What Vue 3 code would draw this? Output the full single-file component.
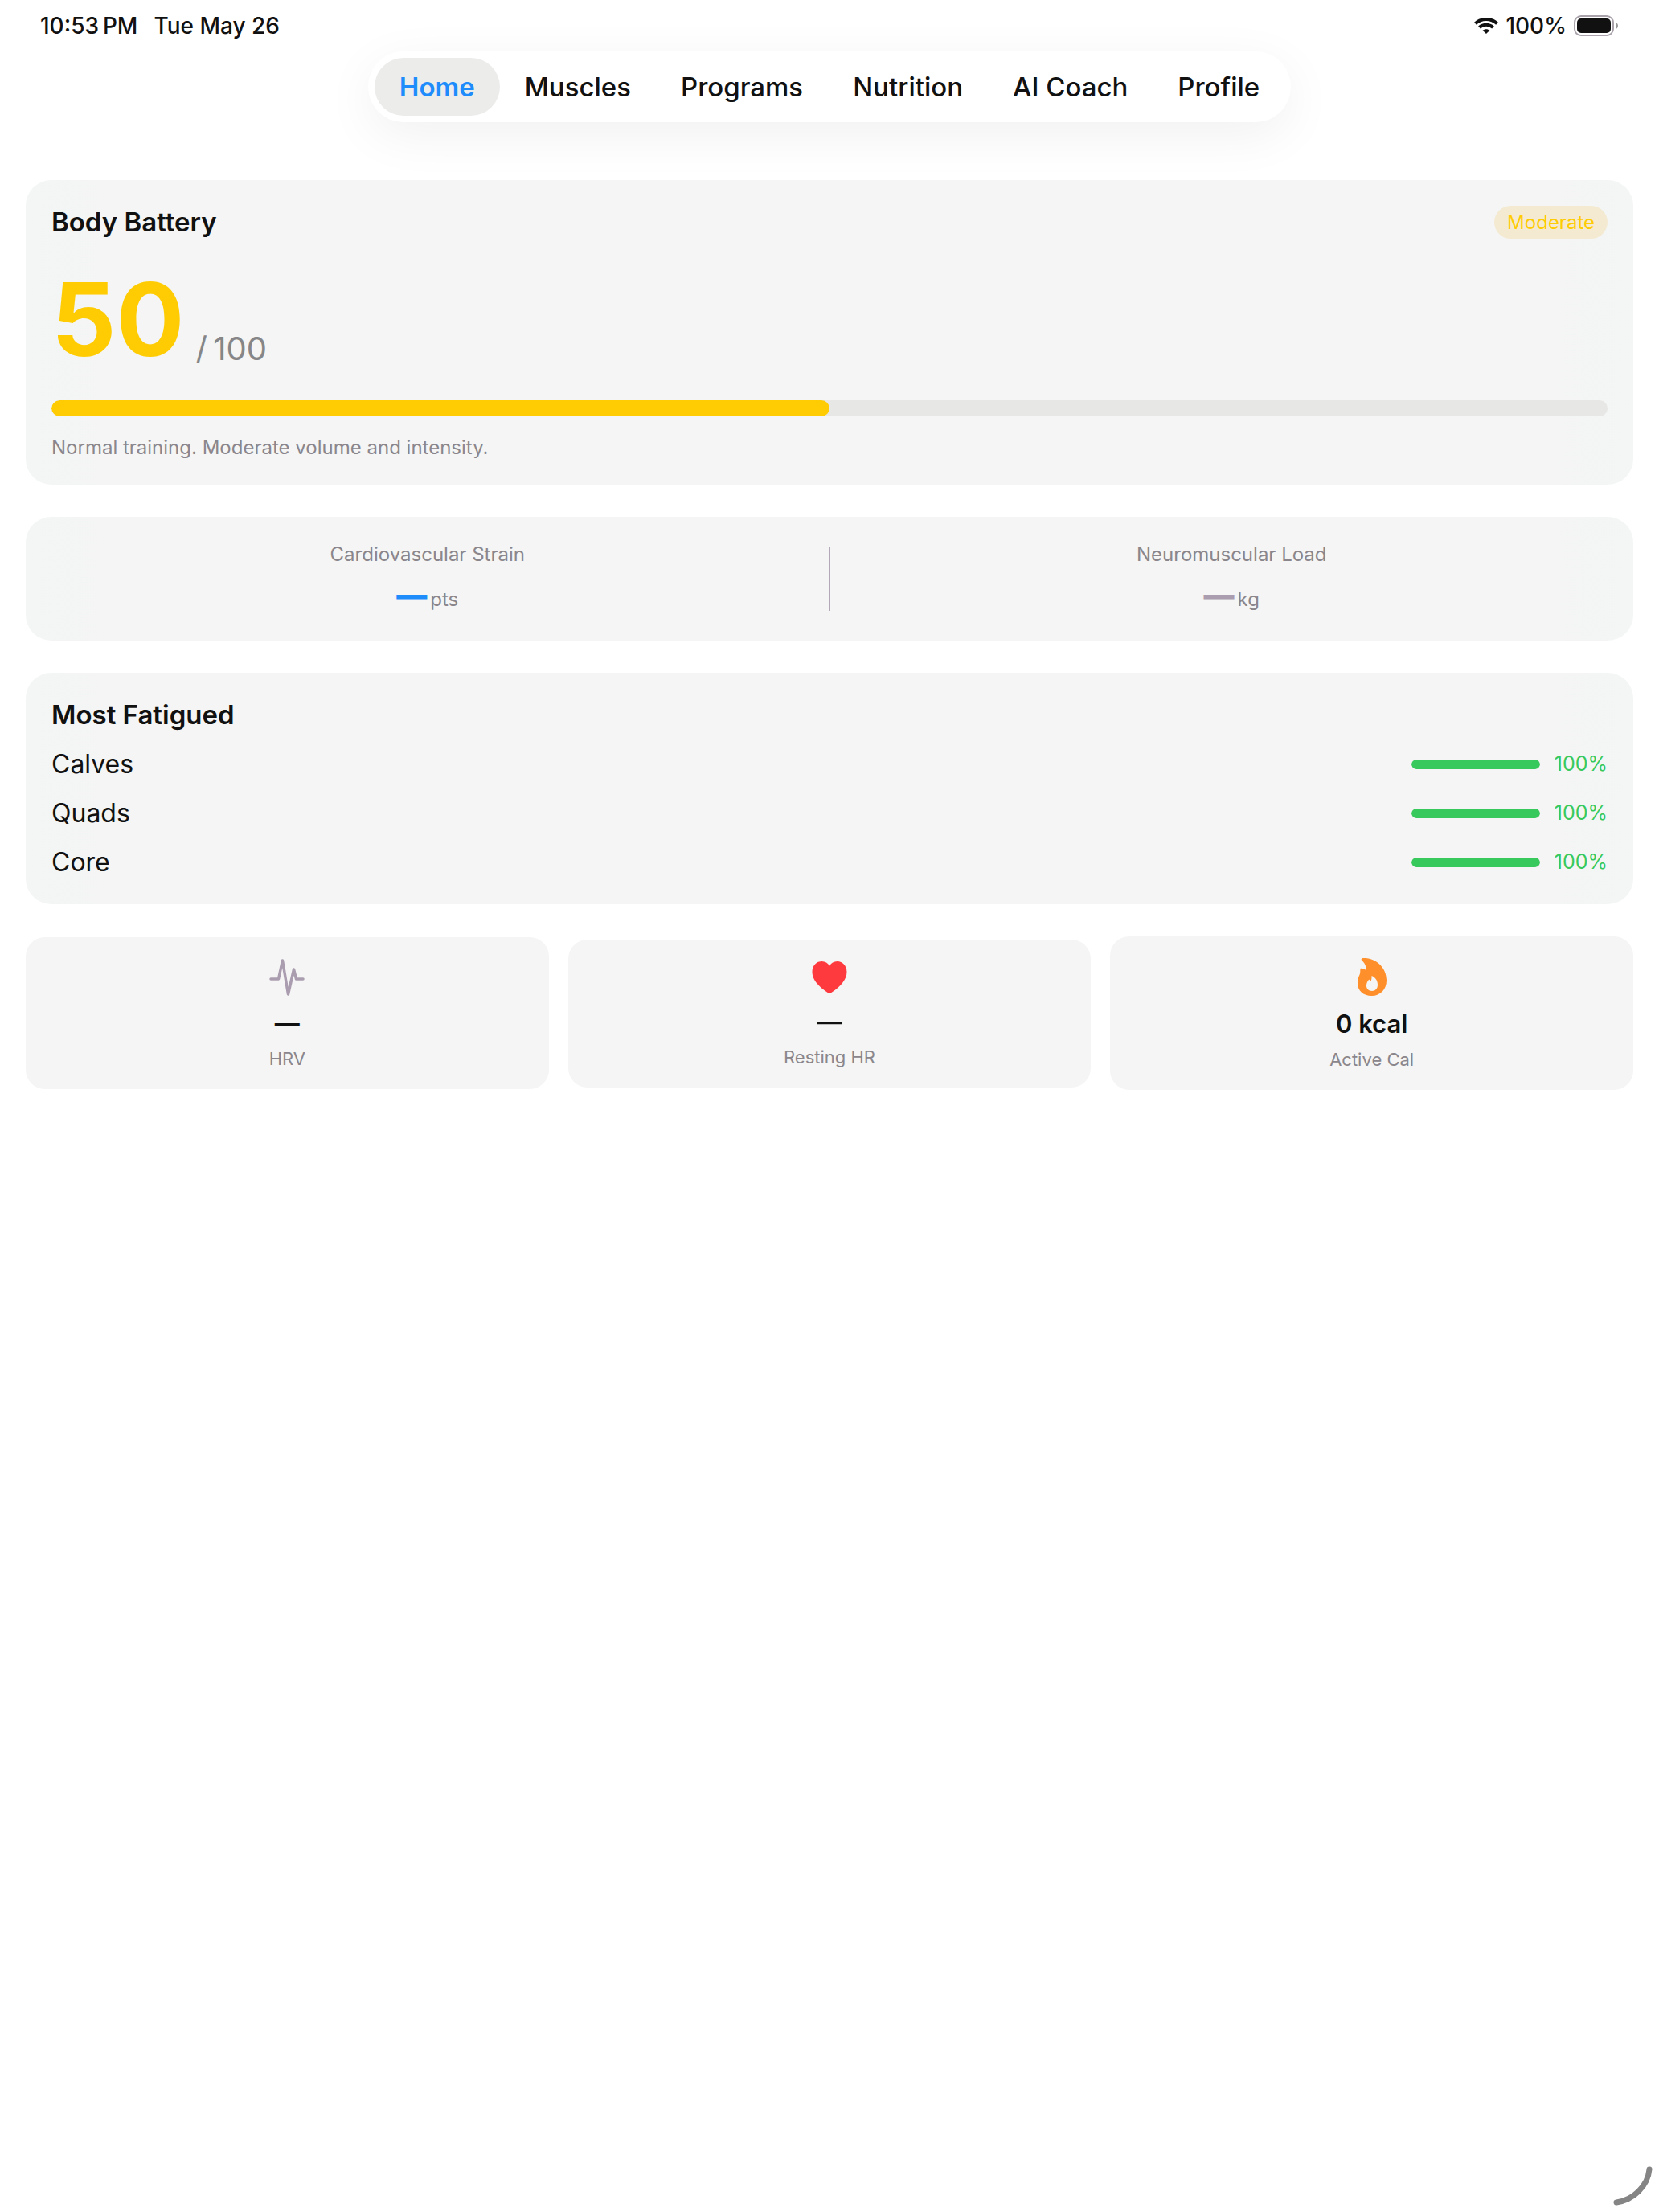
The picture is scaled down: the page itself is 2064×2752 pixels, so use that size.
<script setup>
const tabs = ['Home', 'Muscles', 'Programs', 'Nutrition', 'AI Coach', 'Profile']
const activeTab = 'Home'

const battery = {
  score: 50,
  max: 100,
  level: 'Moderate',
  advice: 'Normal training. Moderate volume and intensity.',
}

const loads = [
  { label: 'Cardiovascular Strain', value: '—', unit: 'pts', tone: 'blue' },
  { label: 'Neuromuscular Load', value: '—', unit: 'kg', tone: 'muted' },
]

const muscles = [
  { name: 'Calves', recovery: 100 },
  { name: 'Quads', recovery: 100 },
  { name: 'Core', recovery: 100 },
]

const vitals = [
  { id: 'hrv', label: 'HRV', value: '—' },
  { id: 'heart', label: 'Resting HR', value: '—' },
  { id: 'flame', label: 'Active Cal', value: '0 kcal' },
]
</script>

<template>
  <div class="screen">
    <header class="status">
      <div class="status-side">
        <time>10:53&#8239;PM</time>
        <span>Tue May 26</span>
      </div>
      <div class="status-side indicators">
        <svg class="wifi" viewBox="0 0 30 20" aria-label="Wi-Fi">
          <path d="M1.5 7.2C9 .1 21 .1 28.500 7.200" />
          <path d="M6.500 12C11.300 7.700 18.700 7.700 23.500 12" />
          <path class="dot" d="M15 20L10.600 15.700C13 13.600 17 13.600 19.400 15.700Z" />
        </svg>
        <span>100%</span>
        <svg class="cell" viewBox="0 0 56 26" aria-label="Battery full">
          <rect class="shell" x="1" y="1" width="48" height="24" rx="8" />
          <rect x="4" y="4" width="42" height="18" rx="5" fill="#111" />
          <path class="nub" d="M52 9C56 10 56 16 52 17Z" />
        </svg>
      </div>
    </header>

    <nav class="tabs" aria-label="Main">
      <a
        v-for="tab in tabs"
        :key="tab"
        href="#"
        class="tab"
        :class="{ active: tab === activeTab }"
        >{{ tab }}</a
      >
    </nav>

    <main class="content">
      <section class="card battery">
        <div class="row">
          <h2>Body Battery</h2>
          <span class="badge">{{ battery.level }}</span>
        </div>
        <p class="score">
          <strong>{{ battery.score }}</strong>
          <span>/&#8239;{{ battery.max }}</span>
        </p>
        <div class="meter" role="progressbar" :aria-valuenow="battery.score" aria-label="Body Battery">
          <div class="meter-fill" :style="{ width: battery.score + '%' }"></div>
        </div>
        <p class="caption">{{ battery.advice }}</p>
      </section>

      <section class="card loads">
        <template v-for="(load, index) in loads" :key="load.label">
          <div v-if="index > 0" class="divider"></div>
          <div class="load">
            <p class="caption">{{ load.label }}</p>
            <p class="load-value">
              <strong :class="load.tone">{{ load.value }}</strong>
              <span>{{ load.unit }}</span>
            </p>
          </div>
        </template>
      </section>

      <section class="card fatigue">
        <h2>Most Fatigued</h2>
        <div v-for="muscle in muscles" :key="muscle.name" class="row">
          <span class="muscle">{{ muscle.name }}</span>
          <span class="recovery">
            <span class="bar" role="progressbar" :aria-valuenow="muscle.recovery" :aria-label="muscle.name">
              <span class="bar-fill" :style="{ width: muscle.recovery + '%' }"></span>
            </span>
            <span class="percent">{{ muscle.recovery }}%</span>
          </span>
        </div>
      </section>

      <section class="vitals">
        <article v-for="vital in vitals" :key="vital.id" class="card vital" :class="vital.id">
          <div class="icon">
            <svg v-if="vital.id === 'hrv'" width="44" height="46" viewBox="0 0 44 46">
              <path
                d="M2 25H11.500L16.500 2L23.500 44L30.500 13L33.500 25H42"
                fill="none"
                stroke="#ab9db0"
                stroke-width="3.5"
                stroke-linecap="round"
                stroke-linejoin="round"
              />
            </svg>
            <svg v-else-if="vital.id === 'heart'" width="44" height="40" viewBox="0 0 44 40">
              <path
                d="M22 40C21 40 20 39.300 19 38.600C8 31 .5 22.500 .5 13.200C.5 5.600 5.700 0 12.400 0C16.600 0 20 2.200 22 5.800C24 2.200 27.400 0 31.600 0C38.300 0 43.500 5.600 43.500 13.200C43.500 22.500 36 31 25 38.600C24 39.300 23 40 22 40Z"
                fill="#ff3a3f"
              />
            </svg>
            <svg v-else width="36" height="47" viewBox="0 0 36 47">
              <path
                fill-rule="evenodd"
                d="M6.500 0C22 -.8 36 11 36 27.500C36 39 28.500 47 17.500 47C7 47 0 40.500 0 31C0 26.500 1.200 23.500 2.600 20.500C3.600 18 3.200 15.500 3.400 13C5.800 12.200 8.500 13 10.800 15.500C11 10 8.500 5.500 5 2.500C4.200 1.500 5 .1 6.500 0ZM17.500 22C17.800 24.500 17.300 26.500 16.500 29L14.200 26.500C12.500 29 11 31 11 34.300C11 38.300 13.900 41 17.900 41C22.200 41 25 38 25 33.300C25 28 22 23.800 17.500 22Z"
                fill="#ff8f2b"
              />
            </svg>
          </div>
          <p class="vital-value">{{ vital.value }}</p>
          <p class="vital-label">{{ vital.label }}</p>
        </article>
      </section>
    </main>

    <svg class="corner" viewBox="0 0 50 50" aria-hidden="true">
      <path d="M46 5C44 26 26 43 5 46" />
    </svg>
  </div>
</template>

<style>
body {
  background: #fff;
}
</style>

<style scoped>
.screen {
  font-family: Inter, 'Liberation Sans', sans-serif;
  color: #111;
}
h2,
p {
  margin: 0;
}
.status {
  display: flex;
  justify-content: space-between;
  height: 64px;
  padding: 0 50px;
  font-size: 28px;
  font-weight: 500;
  line-height: 64px;
}
.status-side {
  display: flex;
  align-items: center;
  gap: 20px;
}
.indicators {
  gap: 9px;
}
.wifi {
  width: 30px;
  height: 20px;
}
.wifi path {
  fill: none;
  stroke: #111;
  stroke-width: 4;
}
.wifi .dot {
  fill: #111;
  stroke: none;
}
.cell {
  width: 56px;
  height: 26px;
}
.cell .shell {
  fill: none;
  stroke: #a9a2ab;
  stroke-width: 2;
}
.cell .nub {
  fill: #999;
}
.tabs {
  display: flex;
  width: fit-content;
  margin: 0 auto;
  padding: 8px;
  border-radius: 44px;
  background: #fff;
  box-shadow: 0 16px 64px rgba(0, 0, 0, 0.06);
}
.tab {
  padding: 0 31px;
  border-radius: 36px;
  color: #111;
  font-size: 33px;
  font-weight: 500;
  line-height: 72px;
  text-decoration: none;
  white-space: nowrap;
}
.tab.active {
  background: #ececeb;
  color: #1e8dfb;
  font-weight: 600;
}
.content {
  display: flex;
  flex-direction: column;
  gap: 40px;
  padding: 72px 32px 0;
}
.card {
  padding: 32px;
  border-radius: 32px;
  background: linear-gradient(90deg, #f3f6f5, #f4f5f4 5%, #f4f5f4 95%, #f3f6f5);
}
h2 {
  font-size: 33px;
  font-weight: 600;
  line-height: 41px;
}
.caption {
  color: #8a868c;
  font-size: 24px;
  line-height: 29px;
}
.row {
  display: flex;
  align-items: center;
  justify-content: space-between;
}
.battery {
  display: flex;
  flex-direction: column;
  gap: 24px;
}
.badge {
  padding: 0 16px;
  border-radius: 21px;
  background: #f4ead2;
  color: #ffcc03;
  font-size: 24px;
  line-height: 41px;
}
.score {
  display: flex;
  align-items: flex-end;
  gap: 14px;
}
.score strong {
  color: #ffcc03;
  font-size: 126px;
  font-weight: 700;
  line-height: 153px;
}
.score span {
  padding-bottom: 16px;
  color: #868688;
  font-size: 40px;
  line-height: 48px;
}
.meter {
  height: 20px;
  border-radius: 10px;
  background: #e7e7e5;
  overflow: hidden;
}
.meter-fill {
  height: 100%;
  border-radius: 10px;
  background: #ffcc03;
}
.loads {
  display: flex;
  align-items: center;
  padding: 32px 0;
}
.load {
  flex: 1;
  text-align: center;
}
.divider {
  width: 1px;
  height: 80px;
  background: #b3a8b8;
}
.load-value {
  display: flex;
  align-items: baseline;
  justify-content: center;
  gap: 4px;
  height: 49px;
  margin-top: 12px;
}
.load-value strong {
  font-size: 38px;
  font-weight: 900;
  line-height: 49px;
}
.load-value span {
  color: #8a868c;
  font-size: 24px;
  line-height: 29px;
}
.blue {
  color: #1e8dfb;
}
.muted {
  color: #ab9db0;
}
.fatigue {
  display: flex;
  flex-direction: column;
  gap: 20px;
}
.muscle {
  font-size: 32px;
  line-height: 41px;
}
.recovery {
  display: flex;
  align-items: center;
}
.bar {
  width: 160px;
  height: 12px;
  border-radius: 6px;
  background: #e7e7e5;
  overflow: hidden;
}
.bar-fill {
  display: block;
  height: 100%;
  border-radius: 6px;
  background: #37c95b;
}
.percent {
  width: 84px;
  color: #37c95b;
  font-size: 25px;
  line-height: 29px;
  text-align: right;
}
.vitals {
  display: grid;
  grid-template-columns: repeat(3, 1fr);
  align-items: center;
  gap: 24px;
}
.vital {
  display: flex;
  flex-direction: column;
  align-items: center;
  gap: 12px;
  padding: 23px 24px 25px;
  border-radius: 24px;
  background: #f4f5f4;
}
.icon {
  display: flex;
  align-items: center;
  height: 55px;
}
.hrv .icon {
  height: 53px;
}
.heart .icon {
  height: 48px;
}
.vital-value {
  font-size: 31px;
  font-weight: 600;
  line-height: 38px;
}
.vital-label {
  color: #8a868c;
  font-size: 22px;
  line-height: 26px;
}
.corner {
  position: fixed;
  right: 8px;
  bottom: 8px;
  width: 50px;
  height: 50px;
}
.corner path {
  fill: none;
  stroke: #858585;
  stroke-width: 7;
  stroke-linecap: round;
}
</style>
